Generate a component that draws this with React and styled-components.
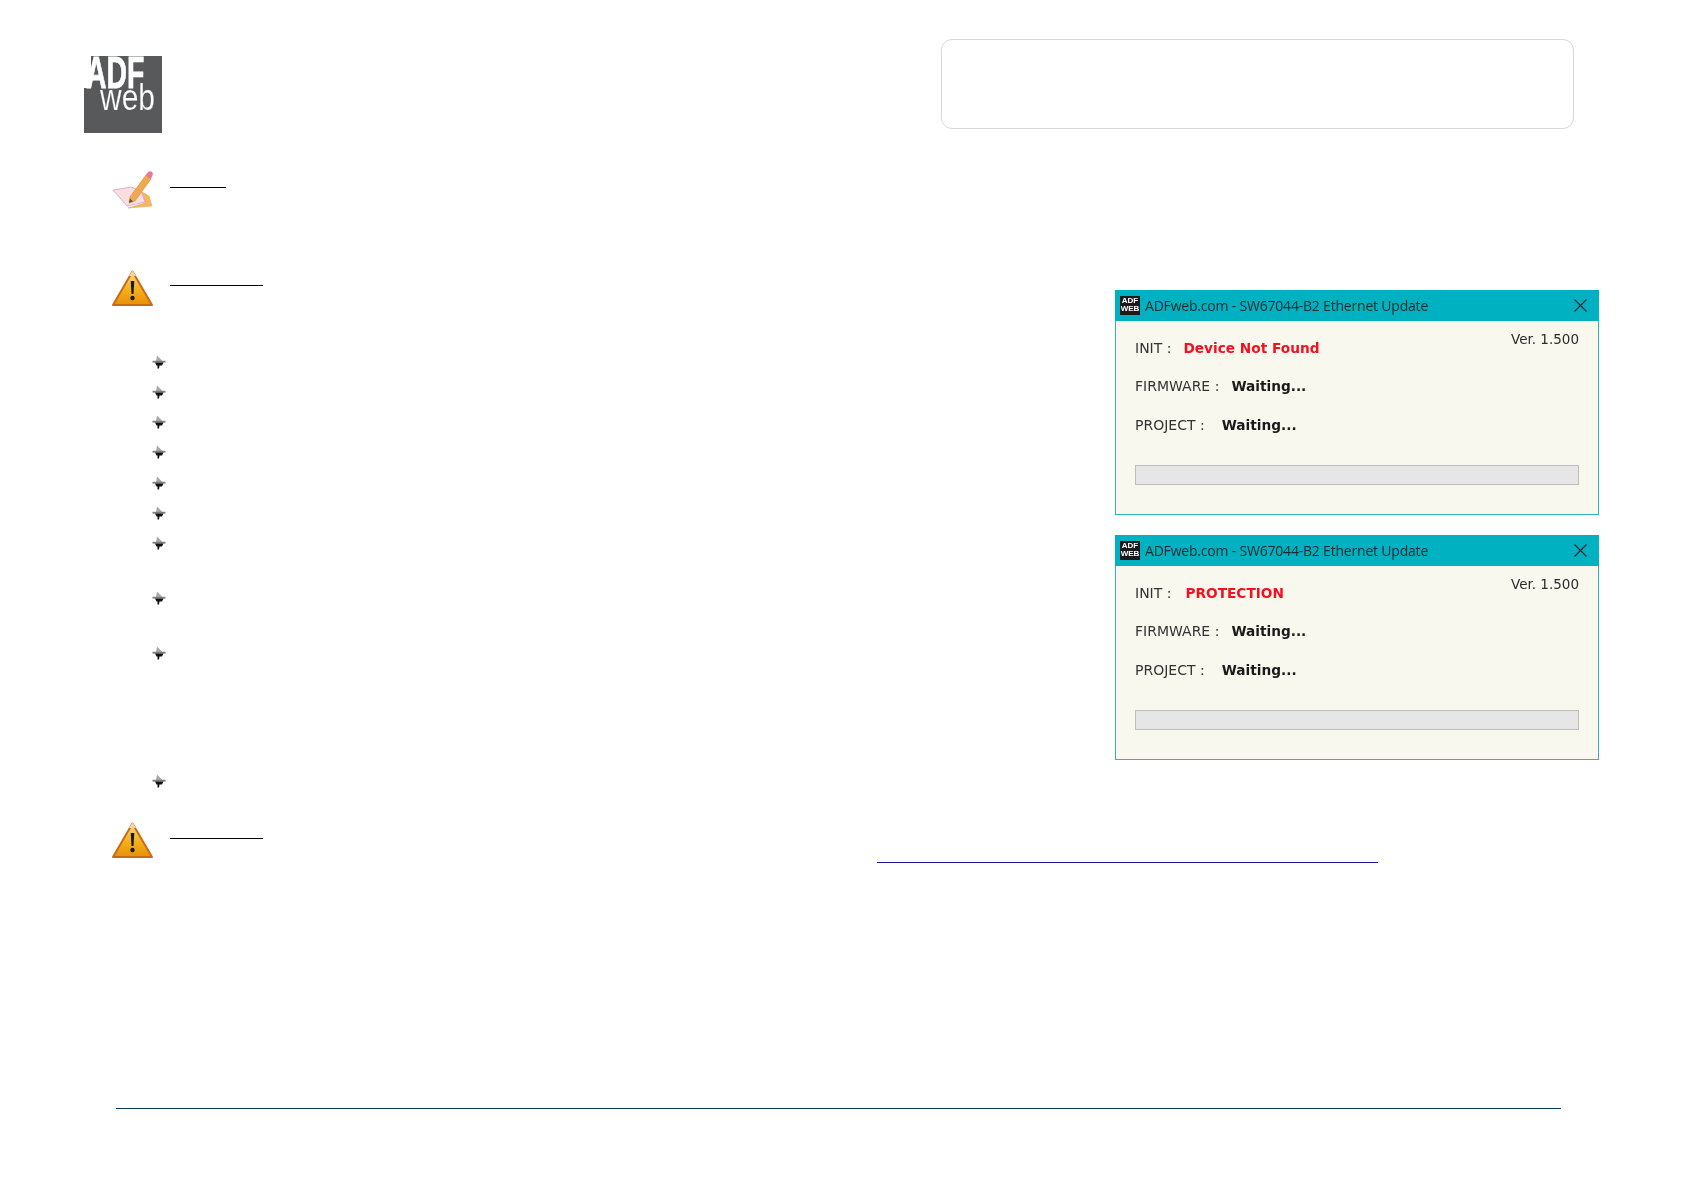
import React from 'react';
import styled, { createGlobalStyle } from 'styled-components';

const Global = createGlobalStyle`
  html, body { margin: 0; padding: 0; background: #fff; }
  body { font-family: "DejaVu Sans", sans-serif; }
`;

const Page = styled.div`
  width: 1684px;
  height: 1190px;
  display: flex;
  flex-direction: column;
  overflow: hidden;
  background: #fff;
`;

const Header = styled.header`
  display: flex;
  justify-content: space-between;
  align-items: flex-start;
  padding: 39px 110px 0 84px;
  height: 94px;
`;

const LogoWrap = styled.svg`
  display: block;
  margin-top: 17px;
  width: 78px;
  height: 77px;
  filter: blur(0.35px);
`;

const InfoBox = styled.div`
  width: 631px;
  height: 88px;
  border: 1px solid #d8d8d8;
  border-radius: 11px;
`;

const Main = styled.main`
  display: flex;
  justify-content: space-between;
  height: 652px;
  margin-top: 37px;
  padding: 0 85px 0 112px;
`;

const LeftColumn = styled.div`
  display: flex;
  flex-direction: column;
`;

const Callout = styled.div`
  display: flex;
  gap: 17px;
  height: ${(p) => p.$height}px;
`;

const FinalCallout = styled(Callout)`
  padding-left: 112px;
`;

const IconSvg = styled.svg`
  display: block;
  flex: none;
  width: 41px;
  height: ${(p) => p.$h}px;
  filter: blur(0.3px);
`;

const RuleStack = styled.div`
  display: flex;
  flex-direction: column;
  padding-top: ${(p) => p.$top}px;
`;

const HeadingRule = styled.div`
  width: ${(p) => p.$width}px;
  height: 1px;
  background: #000;
`;

const LinkRule = styled.div`
  width: 501px;
  height: 1px;
  margin: 23px 0 0 707px;
  background: #14149c;
`;

const BulletList = styled.ul`
  list-style: none;
  margin: 0;
  padding: 0 0 0 40px;
`;

const BulletItem = styled.li`
  height: ${(p) => p.$height}px;
`;

const Bullet = styled.svg`
  display: block;
  width: 14px;
  height: 14px;
  filter: blur(0.25px);
`;

const DialogColumn = styled.div`
  display: flex;
  flex-direction: column;
  gap: 20px;
  padding-top: 120px;
`;

const Dialog = styled.section`
  box-sizing: border-box;
  width: 484px;
  height: 225px;
  display: flex;
  flex-direction: column;
  border: 1px solid #2cb4c0;
  background: #f9f8ef;
  filter: blur(0.3px);
`;

const TitleBar = styled.div`
  display: flex;
  align-items: center;
  height: 31px;
  margin: -1px -1px 0;
  padding: 0 12px 0 5px;
  background: #00b1c2;
  flex: none;
`;

const AppIcon = styled.div`
  box-sizing: border-box;
  flex: none;
  width: 20px;
  height: 19px;
  padding-top: 1px;
  background: #1a1a1a;
  color: #fff;
  font: bold 8px/8px "Liberation Sans", sans-serif;
  text-align: center;
`;

const TitleText = styled.span`
  flex: 1;
  margin-left: 5px;
  font: 14px "Open Sans", sans-serif;
  letter-spacing: -0.2px;
  white-space: nowrap;
  color: #1d2a2e;
`;

const CloseIcon = styled.svg`
  display: block;
  width: 13px;
  height: 13px;
`;

const DialogBody = styled.div`
  position: relative;
  display: flex;
  flex-direction: column;
  flex: 1;
  padding: 17px 19px 0 19px;
`;

const Version = styled.div`
  position: absolute;
  top: 9px;
  right: 19px;
  font-size: 13.5px;
  line-height: 18px;
  color: #2c2c2c;
`;

const StatusRow = styled.div`
  display: flex;
  height: 38.3px;
  line-height: 20px;
  white-space: nowrap;
`;

const StatusLabel = styled.span`
  font-size: 14px;
  color: #333;
  margin-right: ${(p) => p.$gap}px;
`;

const StatusValue = styled.span`
  font-size: 13.7px;
  font-weight: bold;
  color: ${(p) => (p.$error ? '#f5101f' : '#1a1a1a')};
`;

const Progress = styled.div`
  box-sizing: border-box;
  height: 20px;
  margin-top: 12px;
  border: 1px solid #bdbdbb;
  background: #e6e6e6;
`;

const Footer = styled.footer`
  height: 1px;
  margin: auto 123px 81px 116px;
  background: #0c3a5c;
`;

const Logo = () => (
  <LogoWrap viewBox="0 0 78 77">
    <rect width="78" height="77" fill="#58595b" />
    <rect width="7" height="32" fill="#fff" />
    <text transform="translate(2 32) scale(0.645 1)" fill="#fff" fontFamily="Liberation Sans" fontWeight="700" fontSize="44" stroke="#fff" strokeWidth="0.8">ADF</text>
    <text x="16" y="54" fill="#fff" stroke="#58595b" strokeWidth="0.2" fontFamily="Liberation Sans" fontSize="37" textLength="55" lengthAdjust="spacingAndGlyphs">web</text>
  </LogoWrap>
);

const NoteIcon = () => (
  <IconSvg $h={40} viewBox="0 0 41 40">
    <path d="M16 38 L40 36 L37 26 L30 22 L33 33 Z" fill="#f7b562" stroke="#efa64c" strokeWidth="0.6" />
    <path d="M1 20 L19 17 L29 21 L33 32 L15 36 Z" fill="#fbdfe0" stroke="#c9a2c9" strokeWidth="0.8" />
    <path d="M18 27 L34 5 L39 9 L23 31 L17 33 Z" fill="#f0a94f" stroke="#d68a35" strokeWidth="0.6" />
    <path d="M33.5 5.5 L36 2 Q40 0 41 4 L39 9 Z" fill="#e8789a" />
    <path d="M18 28.5 L17 33 L21 31.5 Z" fill="#555" />
  </IconSvg>
);

const WarningIcon = () => (
  <IconSvg $h={37} viewBox="0 0 41 37">
    <defs>
      <linearGradient id="warn" x1="0" y1="0" x2="0" y2="1">
        <stop offset="0" stopColor="#fbd98a" />
        <stop offset="0.55" stopColor="#f4b01a" />
        <stop offset="1" stopColor="#e98f08" />
      </linearGradient>
    </defs>
    <path d="M20.5 1.5 L40 35 L1 35 Z" fill="url(#warn)" stroke="#c9691a" strokeWidth="2" strokeLinejoin="round" />
    <path d="M20.5 0.5 L24 6 L17 6 Z" fill="#f6d3a4" />
    <path d="M18.7 11 H22.3 L21.5 24 H19.5 Z" fill="#1c1c1c" />
    <circle cx="20.5" cy="28" r="2.2" fill="#1c1c1c" />
  </IconSvg>
);

const BulletGlyph = () => (
  <Bullet viewBox="0 0 14 14">
    <path d="M5 0.5 L10.5 6 H4 Z" fill="#a8a8a8" />
    <path d="M0.5 5.8 H13.5 V7.6 H0.5 Z" fill="#7d7d7d" />
    <path d="M3 7.6 H11.5 L10 10.5 H7.5 L7 13.5 H5.5 V10.5 H4.5 Z" fill="#111" />
  </Bullet>
);

const XIcon = () => (
  <CloseIcon viewBox="0 0 13 13">
    <path d="M0.5 0.5 L12.5 12.5 M12.5 0.5 L0.5 12.5" stroke="#1c2c30" strokeWidth="1.2" fill="none" />
  </CloseIcon>
);

const UpdateDialog = ({ init, gap }) => (
  <Dialog>
    <TitleBar>
      <AppIcon>ADF<br />WEB</AppIcon>
      <TitleText>ADFweb.com - SW67044-B2 Ethernet Update</TitleText>
      <XIcon />
    </TitleBar>
    <DialogBody>
      <Version>Ver. 1.500</Version>
      <StatusRow>
        <StatusLabel $gap={gap}>INIT :</StatusLabel>
        <StatusValue $error>{init}</StatusValue>
      </StatusRow>
      <StatusRow>
        <StatusLabel $gap={12}>FIRMWARE :</StatusLabel>
        <StatusValue>Waiting...</StatusValue>
      </StatusRow>
      <StatusRow>
        <StatusLabel $gap={17}>PROJECT :</StatusLabel>
        <StatusValue>Waiting...</StatusValue>
      </StatusRow>
      <Progress />
    </DialogBody>
  </Dialog>
);

const bulletHeights = [30, 30, 30, 31, 30, 30, 55, 55, 128, 48];

export default function App() {
  return (
    <Page>
      <Global />
      <Header>
        <Logo />
        <InfoBox />
      </Header>
      <Main>
        <LeftColumn>
          <Callout $height={100}>
            <NoteIcon />
            <RuleStack $top={17}><HeadingRule $width={56} /></RuleStack>
          </Callout>
          <Callout $height={85}>
            <WarningIcon />
            <RuleStack $top={15}><HeadingRule $width={93} /></RuleStack>
          </Callout>
          <BulletList>
            {bulletHeights.map((h, i) => (
              <BulletItem key={i} $height={h}><BulletGlyph /></BulletItem>
            ))}
          </BulletList>
        </LeftColumn>
        <DialogColumn>
          <UpdateDialog init="Device Not Found" gap={12} />
          <UpdateDialog init="PROTECTION" gap={14} />
        </DialogColumn>
      </Main>
      <FinalCallout $height={60}>
        <WarningIcon />
        <RuleStack $top={16}>
          <HeadingRule $width={93} />
          <LinkRule />
        </RuleStack>
      </FinalCallout>
      <Footer />
    </Page>
  );
}
